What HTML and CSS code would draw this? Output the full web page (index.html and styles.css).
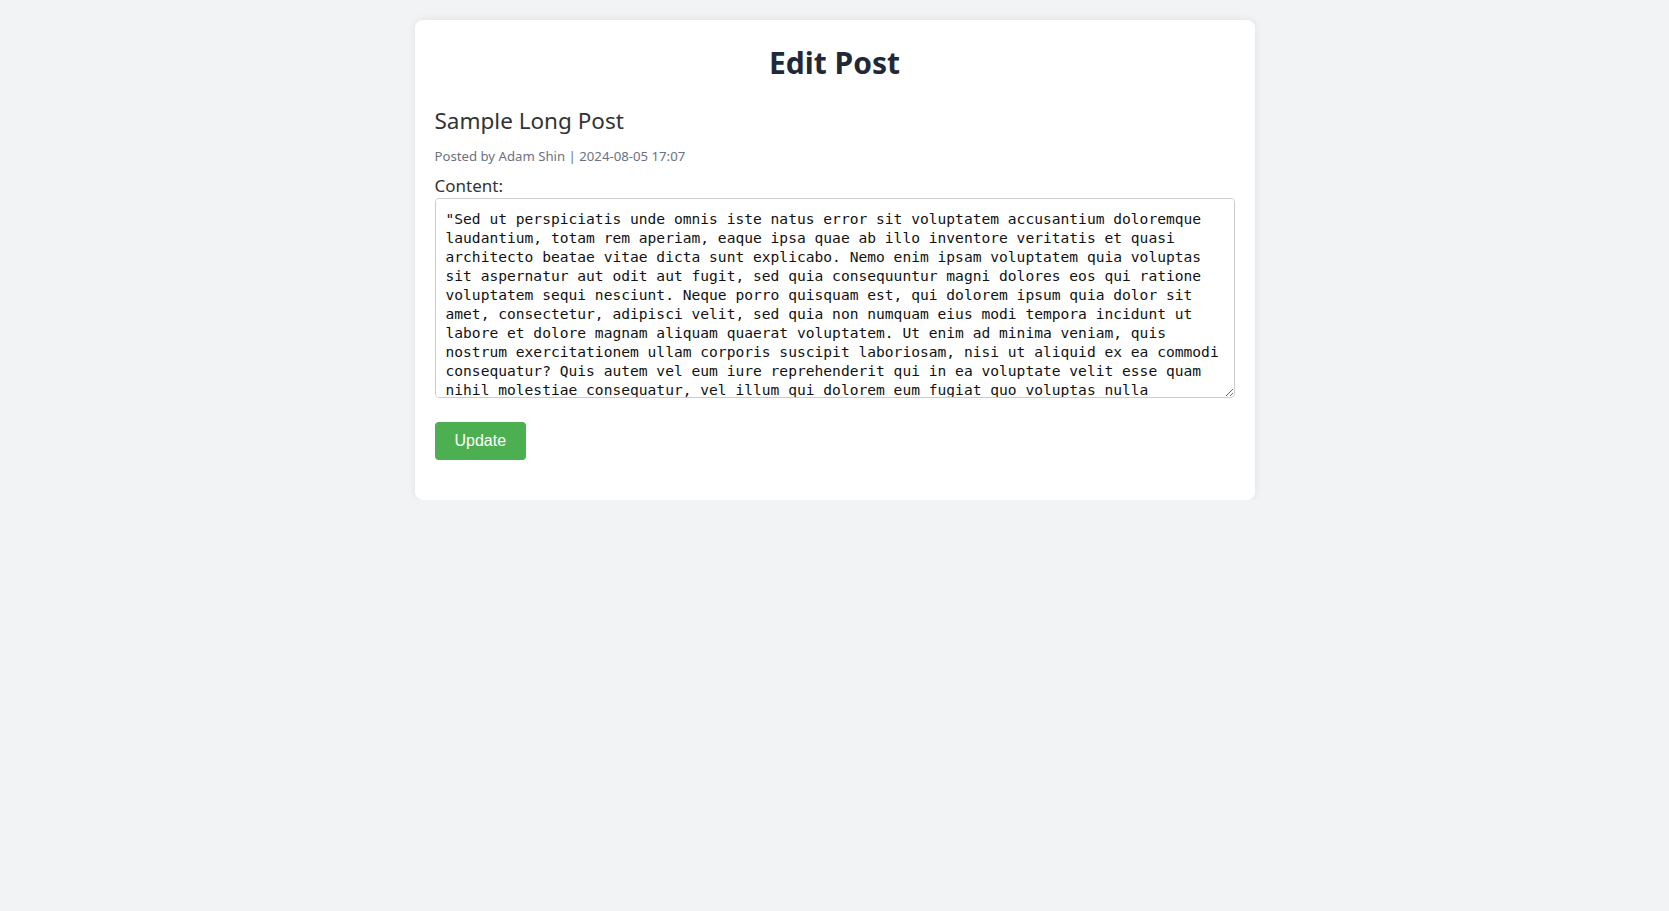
FILE: index.html
```html
<!DOCTYPE html>
<html lang="en">
<head>
<meta charset="utf-8">
<title>Edit Post</title>
<link rel="stylesheet" href="styles.css">
</head>
<body>
<main class="card">
  <h1 class="page-title">Edit Post</h1>
  <h2 class="post-title">Sample Long Post</h2>
  <p class="meta">Posted by Adam Shin | 2024-08-05 17:07</p>
  <form class="edit-form">
    <label class="field-label" for="content">Content:</label>
    <textarea class="content-input" id="content" name="content">"Sed ut perspiciatis unde omnis iste natus error sit voluptatem accusantium doloremque laudantium, totam rem aperiam, eaque ipsa quae ab illo inventore veritatis et quasi architecto beatae vitae dicta sunt explicabo. Nemo enim ipsam voluptatem quia voluptas sit aspernatur aut odit aut fugit, sed quia consequuntur magni dolores eos qui ratione voluptatem sequi nesciunt. Neque porro quisquam est, qui dolorem ipsum quia dolor sit amet, consectetur, adipisci velit, sed quia non numquam eius modi tempora incidunt ut labore et dolore magnam aliquam quaerat voluptatem. Ut enim ad minima veniam, quis nostrum exercitationem ullam corporis suscipit laboriosam, nisi ut aliquid ex ea commodi consequatur? Quis autem vel eum iure reprehenderit qui in ea voluptate velit esse quam nihil molestiae consequatur, vel illum qui dolorem eum fugiat quo voluptas nulla pariatur?"

"Sed ut perspiciatis unde omnis iste natus error sit voluptatem accusantium doloremque laudantium, totam rem aperiam, eaque ipsa quae ab illo inventore veritatis et quasi architecto beatae vitae dicta sunt explicabo. Nemo enim ipsam voluptatem quia voluptas sit aspernatur aut odit aut fugit, sed quia consequuntur magni dolores eos qui ratione voluptatem sequi nesciunt."</textarea>
    <button class="btn-update" type="submit">Update</button>
  </form>
</main>
</body>
</html>
```
FILE: styles.css
```css
html, body {
  margin: 0;
  padding: 0;
}

body {
  background: #f2f3f5;
  font-family: "Segoe UI", "Noto Sans", "Open Sans", sans-serif;
  color: #333333;
}

.card {
  box-sizing: content-box;
  max-width: 800px;
  margin: 20px auto 0;
  padding: 22px 20px 20px;
  background: #ffffff;
  border-radius: 8px;
  box-shadow: 0 0 10px rgba(0, 0, 0, 0.08);
}

.page-title {
  margin: 0 0 21px;
  font-size: 30px;
  line-height: 42px;
  font-weight: 700;
  text-align: center;
  color: #1f2937;
}

.post-title {
  margin: 0 0 10px;
  font-size: 22.5px;
  line-height: 32px;
  font-weight: 400;
  color: #333333;
}

.meta {
  margin: 0 0 8px;
  font-size: 13.2px;
  line-height: 19px;
  color: #6b7280;
}

.edit-form {
  display: flex;
  flex-direction: column;
  align-items: flex-start;
  padding-bottom: 20px;
}

.field-label {
  display: block;
  font-size: 17px;
  line-height: 24px;
  color: #333333;
}

.content-input {
  box-sizing: border-box;
  width: 100%;
  height: 200px;
  margin: 0 0 24px;
  padding: 10px;
  border: 1px solid #cccccc;
  border-radius: 4px;
  font-family: "DejaVu Sans Mono", "Liberation Mono", monospace;
  font-size: 14.6px;
  line-height: 19px;
  color: #111111;
  background: #ffffff;
  scrollbar-width: none;
}

.btn-update {
  height: 38px;
  padding: 0 20px;
  border: none;
  border-radius: 4px;
  background: #4caf50;
  color: #ffffff;
  font-family: "Liberation Sans", Arial, sans-serif;
  font-size: 16px;
  cursor: pointer;
}
```
